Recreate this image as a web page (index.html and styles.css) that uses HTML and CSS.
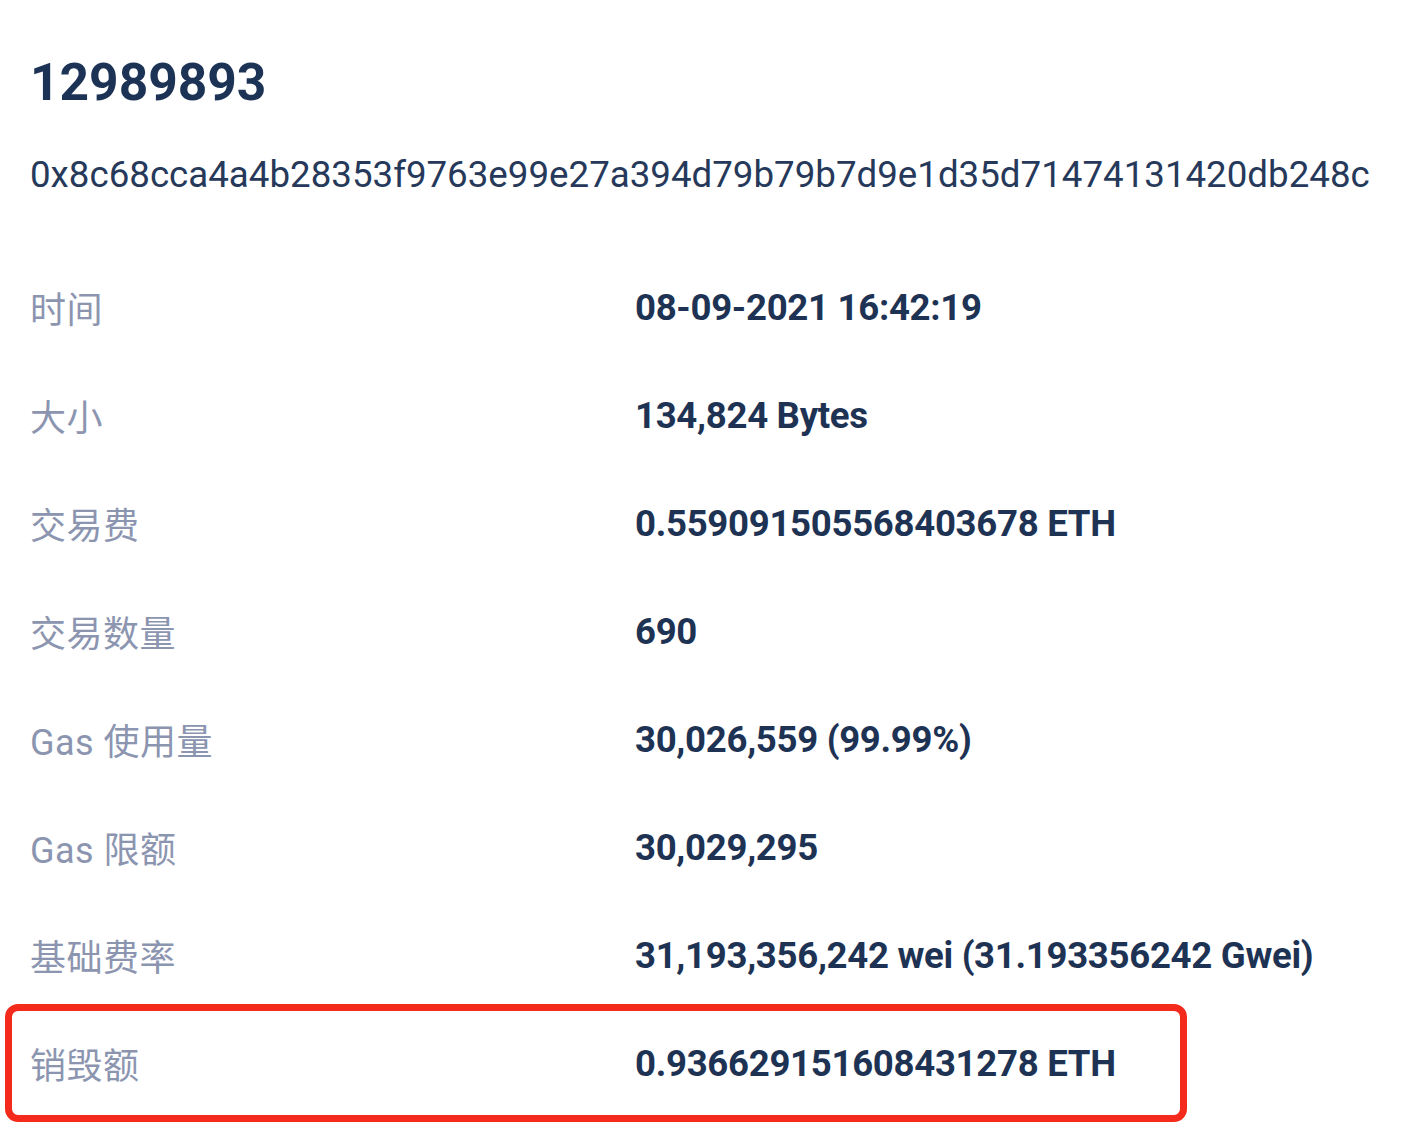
FILE: index.html
```html
<!DOCTYPE html>
<html lang="zh-CN">
<head>
<meta charset="utf-8">
<title>Block 12989893</title>
<link rel="stylesheet" href="styles.css">
</head>
<body>
<main class="block">
  <h1 class="block-number">12989893</h1>
  <p class="block-hash">0x8c68cca4a4b28353f9763e99e27a394d79b79b7d9e1d35d71474131420db248c</p>
  <dl class="details">
    <div class="row"><dt>时间</dt><dd>08-09-2021&nbsp;16:42:19</dd></div>
    <div class="row"><dt>大小</dt><dd>134,824 Bytes</dd></div>
    <div class="row"><dt>交易费</dt><dd>0.559091505568403678 ETH</dd></div>
    <div class="row"><dt>交易数量</dt><dd>690</dd></div>
    <div class="row"><dt>Gas 使用量</dt><dd>30,026,559 (99.99%)</dd></div>
    <div class="row"><dt>Gas 限额</dt><dd>30,029,295</dd></div>
    <div class="row"><dt>基础费率</dt><dd>31,193,356,242 wei (31.193356242 Gwei)</dd></div>
    <div class="row highlight"><dt>销毁额</dt><dd>0.936629151608431278 ETH</dd></div>
  </dl>
</main>
</body>
</html>
```

FILE: styles.css
```css
html, body {
  margin: 0;
  padding: 0;
  background: #ffffff;
}

body {
  font-family: Roboto, "Noto Sans CJK SC", sans-serif;
  color: #1e3354;
}

.block {
  padding: 51px 0 28px 30px;
}

.block-number {
  margin: 0;
  font-size: 51.5px;
  line-height: 64px;
  font-weight: 700;
  color: #1d3356;
}

.block-hash {
  margin: 36px 0 0 0;
  font-size: 36.7px;
  line-height: 48px;
  font-weight: 400;
  color: #26395a;
  white-space: nowrap;
}

.details {
  margin: 54px 0 0 0;
  padding: 0;
}

.row {
  display: grid;
  grid-template-columns: 605px 1fr;
  align-items: center;
  height: 108px;
}

.row dt {
  margin: 0;
  font-family: Roboto, "Noto Sans CJK SC", sans-serif;
  font-size: 36px;
  font-weight: 400;
  letter-spacing: 0.5px;
  color: #8c95b0;
}

.row dd {
  margin: 0;
  font-size: 36.6px;
  font-weight: 700;
  letter-spacing: -0.3px;
  color: #1e3354;
  white-space: nowrap;
}

.highlight {
  position: relative;
}

.highlight::after {
  content: "";
  position: absolute;
  left: -25px;
  top: -5px;
  bottom: -5px;
  width: 1182px;
  border: 7px solid #f42b1c;
  border-radius: 13px;
  box-sizing: border-box;
  pointer-events: none;
}
```
